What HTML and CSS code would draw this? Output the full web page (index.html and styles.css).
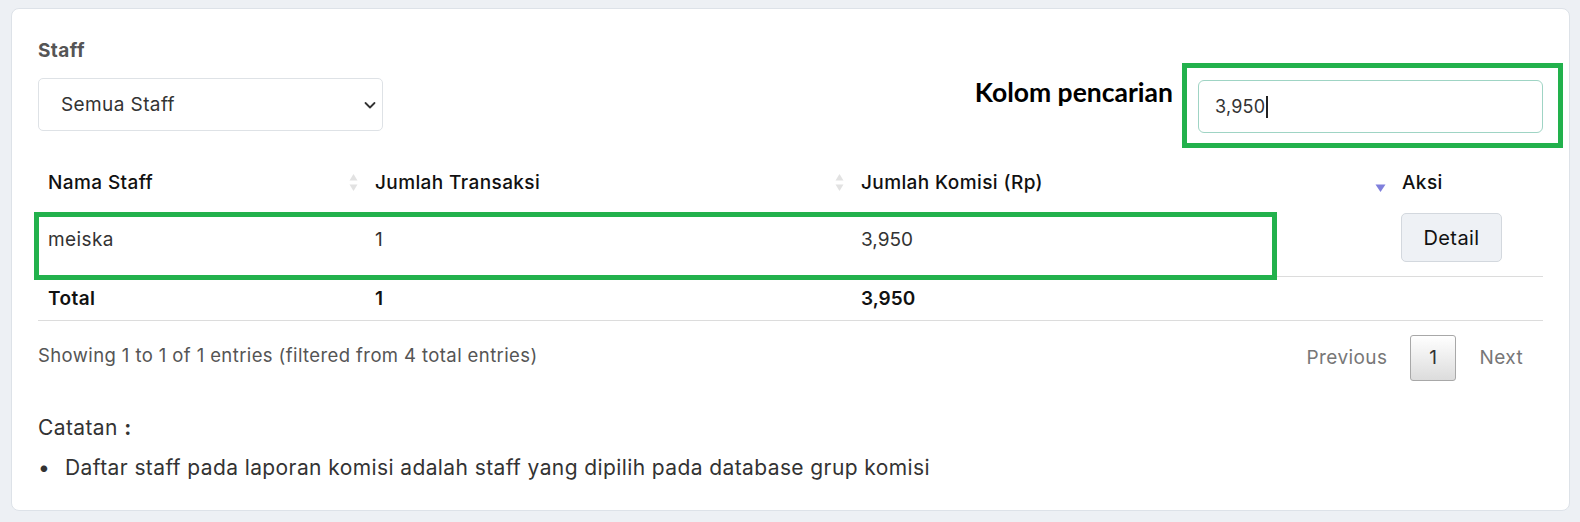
FILE: index.html
```html
<!DOCTYPE html>
<html lang="id">
<head>
    <meta charset="UTF-8">
    <meta name="viewport" content="width=device-width, initial-scale=1.0">
    <title>Laporan Komisi Staff</title>
    <link rel="stylesheet" href="styles.css">
</head>
<body>
    <div class="card">
        <div class="toolbar">
            <div class="filter">
                <div class="field-label">Staff</div>
                <div class="select">
                    <span>Semua Staff</span>
                    <svg width="14" height="14" viewBox="0 0 14 14"><path d="M2.5 5l4.5 4.5L11.5 5" fill="none" stroke="#333" stroke-width="1.8" stroke-linecap="round" stroke-linejoin="round"/></svg>
                </div>
            </div>
            <div class="search">
                <span class="search-label">Kolom pencarian</span>
                <div class="search-box">
                    <span class="search-value">3,950</span><span class="caret"></span>
                </div>
            </div>
        </div>

        <div class="table-wrap">
            <table class="report">
                <colgroup>
                    <col class="c1"><col class="c2"><col class="c3"><col>
                </colgroup>
                <thead>
                    <tr>
                        <th><div class="th-in"><span>Nama Staff</span>
                            <svg class="sort" width="13" height="21" viewBox="0 0 13 21"><path d="M6.5 2L10.5 8.5H2.5Z" fill="#e2e2e2"/><path d="M6.5 19L10.5 12.5H2.5Z" fill="#e2e2e2"/></svg></div></th>
                        <th><div class="th-in"><span>Jumlah Transaksi</span>
                            <svg class="sort" width="13" height="21" viewBox="0 0 13 21"><path d="M6.5 2L10.5 8.5H2.5Z" fill="#e2e2e2"/><path d="M6.5 19L10.5 12.5H2.5Z" fill="#e2e2e2"/></svg></div></th>
                        <th><div class="th-in"><span>Jumlah Komisi (Rp)</span>
                            <svg class="sort" width="13" height="21" viewBox="0 0 13 21"><path d="M1.5 12.5H11.5L6.5 20Z" fill="#7f7fdc"/></svg></div></th>
                        <th>Aksi</th>
                    </tr>
                </thead>
                <tbody>
                    <tr class="row">
                        <td>meiska</td>
                        <td>1</td>
                        <td class="num">3,950</td>
                        <td class="act"><button class="btn-detail">Detail</button></td>
                    </tr>
                </tbody>
                <tfoot>
                    <tr class="total">
                        <td>Total</td>
                        <td>1</td>
                        <td class="num">3,950</td>
                        <td></td>
                    </tr>
                </tfoot>
            </table>
            <div class="mark"></div>
        </div>

        <div class="table-foot">
            <div class="info">Showing 1 to 1 of 1 entries (filtered from 4 total entries)</div>
            <div class="paging">
                <span class="page-btn">Previous</span>
                <span class="page-btn current">1</span>
                <span class="page-btn">Next</span>
            </div>
        </div>

        <div class="notes">
            <div class="notes-title">Catatan <b>:</b></div>
            <ul>
                <li>Daftar staff pada laporan komisi adalah staff yang dipilih pada database grup komisi</li>
            </ul>
        </div>
    </div>
</body>
</html>
```
FILE: styles.css
```css
body {
    margin: 0;
    background-color: #edf0f4;
    font-family: Inter, "Open Sans", sans-serif;
    font-size: 19px;
    letter-spacing: 0.4px;
    color: #222;
}

.card {
    margin: 8px 10px 0 11px;
    padding: 29px 26px 30px 26px;
    background-color: #fff;
    border: 1px solid #dde2e8;
    border-radius: 8px;
}

.toolbar {
    display: flex;
    justify-content: space-between;
    align-items: flex-end;
}

.field-label {
    font-size: 19px;
    font-weight: 700;
    line-height: 24px;
    color: #555;
    margin-top: 1px;
    margin-bottom: 15px;
}

.select {
    width: 345px;
    height: 53px;
    box-sizing: border-box;
    padding: 0 5px 0 22px;
    border: 1px solid #dee2e6;
    border-radius: 5px;
    display: flex;
    align-items: center;
    justify-content: space-between;
    color: #333;
}

.search {
    display: flex;
    align-items: flex-start;
    gap: 25px;
    margin-bottom: -2px;
}

.search-label {
    font-family: Lato, "Liberation Sans", sans-serif;
    font-weight: 700;
    font-size: 26.5px;
    letter-spacing: 0;
    line-height: 24px;
    color: #000;
}

.search-box {
    position: relative;
    width: 345px;
    height: 53px;
    box-sizing: border-box;
    padding: 0 16px;
    border: 1px solid #9fd4c4;
    border-radius: 6px;
    display: flex;
    align-items: center;
    font-size: 18px;
    letter-spacing: 0.2px;
    color: #333;
}

/* annotation frame */
.search-box::after {
    content: "";
    position: absolute;
    top: -18px;
    bottom: -16px;
    left: -17px;
    right: -21px;
    border: 5px solid #22b14c;
}

.caret {
    width: 2px;
    height: 22px;
    background: #222;
    margin-left: 1px;
}

.table-wrap {
    position: relative;
    margin-top: 29px;
}

.report {
    width: 100%;
    border-collapse: collapse;
}

.report col.c1 { width: 327px; }
.report col.c2 { width: 486px; }
.report col.c3 { width: 541px; }

.report th {
    height: 45px;
    padding: 0 5px 0 10px;
    text-align: left;
    font-weight: 500;
    color: #111;
}

.th-in {
    display: flex;
    justify-content: space-between;
    align-items: center;
}

.report td {
    padding: 10px 10px 11px;
    vertical-align: middle;
    color: #333;
    line-height: 22px;
}

.report td.num {
    letter-spacing: 0;
}

.report .row td {
    border-bottom: 1px solid #dcdcdc;
}

.report .row td.act {
    padding: 8px 10px 14px 9px;
}

.btn-detail {
    width: 101px;
    height: 49px;
    font-family: inherit;
    font-size: 20px;
    letter-spacing: 0.4px;
    color: #111;
    background-color: #eef1f5;
    border: 1px solid #d3d8de;
    border-radius: 5px;
}

.report .total td {
    padding: 11px 10px 10px;
    font-weight: 600;
    color: #111;
    border-bottom: 1px solid #dcdcdc;
}

/* annotation frame */
.mark {
    position: absolute;
    top: 52px;
    left: -4px;
    width: 1243px;
    height: 68px;
    box-sizing: border-box;
    border: 5px solid #22b14c;
}

.table-foot {
    margin-top: 14px;
    display: flex;
    justify-content: space-between;
    align-items: flex-start;
}

.info {
    padding-top: 8px;
    line-height: 24px;
    font-size: 18.5px;
    color: #555;
}

.paging {
    display: flex;
    margin-right: 3px;
}

.page-btn {
    padding: 8px 16px;
    margin-left: 6px;
    line-height: 28px;
    border: 1px solid transparent;
    border-radius: 3px;
    color: #777;
}

.page-btn.current {
    padding: 8px 18px;
    color: #333;
    border-color: #a8a8a8;
    background: linear-gradient(to bottom, #fff 0%, #dcdcdc 100%);
}

.notes {
    margin-top: 35px;
    color: #333;
    font-size: 21px;
}

.notes-title {
    line-height: 24px;
}

.notes ul {
    margin: 16px 0 0;
    padding: 0;
    list-style: none;
}

.notes li {
    display: flex;
    line-height: 24px;
}

.notes li::before {
    content: "•";
    width: 27px;
    flex: none;
}
```
